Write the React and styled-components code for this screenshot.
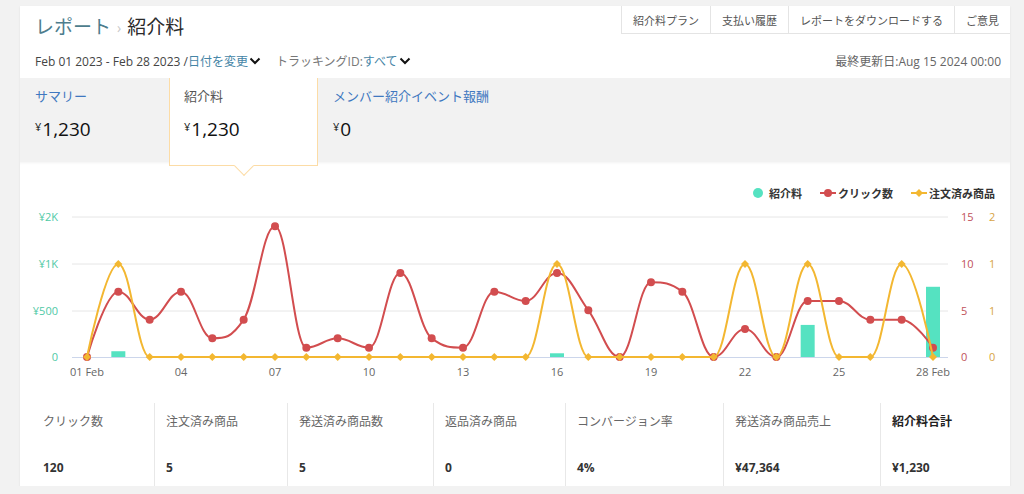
import styled, { createGlobalStyle } from 'styled-components';

const GlobalStyle = createGlobalStyle`
  body {
    margin: 0;
    background: #f2f2f2;
    font-family: "Open Sans", "Noto Sans CJK JP", sans-serif;
    color: #333;
  }
`;

const clicks = [0, 7, 4, 7, 2, 4, 14, 1, 2, 1, 9, 2, 1, 7, 6, 9, 5, 0, 8, 7, 0, 3, 0, 6, 6, 4, 4, 1];
const orderDays = [2, 16, 22, 24, 27];
const fees = { 2: 62, 16: 40, 24: 345, 28: 755 };

const TEAL = '#55e2c1';
const RED = '#d24d4f';
const YELLOW = '#f3b731';

const dayX = (d) => 67 + (d - 1) * (846 / 27);
const BASE = 156;

// highcharts-like spline, flat at local extremes
const splinePath = (pts) => {
  const sm = 1.5;
  const den = sm + 1;
  const ctrl = pts.map((p, i) => {
    if (i === 0 || i === pts.length - 1) return null;
    const l = pts[i - 1];
    const n = pts[i + 1];
    const lcx = (sm * p.x + l.x) / den;
    const rcx = (sm * p.x + n.x) / den;
    let lcy = (sm * p.y + l.y) / den;
    let rcy = (sm * p.y + n.y) / den;
    const corr = ((rcy - lcy) * (rcx - p.x)) / (rcx - lcx) + p.y - rcy;
    lcy += corr;
    rcy += corr;
    if (lcy > l.y && lcy > p.y) {
      lcy = Math.max(l.y, p.y);
      rcy = 2 * p.y - lcy;
    } else if (lcy < l.y && lcy < p.y) {
      lcy = Math.min(l.y, p.y);
      rcy = 2 * p.y - lcy;
    }
    if (rcy > n.y && rcy > p.y) {
      rcy = Math.max(n.y, p.y);
      lcy = 2 * p.y - rcy;
    } else if (rcy < n.y && rcy < p.y) {
      rcy = Math.min(n.y, p.y);
      lcy = 2 * p.y - rcy;
    }
    return { lcx, lcy, rcx, rcy };
  });
  let d = `M ${pts[0].x} ${pts[0].y}`;
  for (let i = 1; i < pts.length; i++) {
    const prev = ctrl[i - 1] || { rcx: pts[i - 1].x, rcy: pts[i - 1].y };
    const cur = ctrl[i] || { lcx: pts[i].x, lcy: pts[i].y };
    d += ` C ${prev.rcx} ${prev.rcy} ${cur.lcx} ${cur.lcy} ${pts[i].x} ${pts[i].y}`;
  }
  return d;
};

const clickPts = clicks.map((v, i) => ({ x: dayX(i + 1), y: BASE - v * (140 / 15) }));
const orderPts = clicks.map((_, i) => ({ x: dayX(i + 1), y: BASE - (orderDays.includes(i + 1) ? 93 : 0) }));

const Card = styled.div`
  width: 990px;
  margin: 6px 0 0 20px;
  background: #fff;
  box-shadow: 0 1px 2px rgba(0, 0, 0, 0.08);
`;

const Header = styled.div`
  padding: 0 9px 8px 15px;
`;

const TopRow = styled.div`
  display: flex;
  justify-content: space-between;
  align-items: flex-start;
  height: 40px;
  margin-right: -9px;
`;

const Title = styled.h1`
  margin: 0;
  height: 40px;
  display: flex;
  align-items: center;
  font-size: 19px;
  font-weight: 400;
  color: #2a2a2a;
`;

const Crumb = styled.span`
  color: #4d7d8d;
`;

const CrumbSep = styled.span`
  color: #c8c8c8;
  font-size: 14px;
  margin: 2px 6px 0;
`;

const Nav = styled.div`
  display: flex;
  border-bottom: 1px solid #e4e4e4;
`;

const NavButton = styled.div`
  height: 27px;
  padding: 0 11px;
  display: flex;
  align-items: center;
  font-size: 11px;
  color: #555;
  border-left: 1px solid #e4e4e4;
`;

const FilterRow = styled.div`
  display: flex;
  align-items: center;
  height: 18px;
  margin-top: 6px;
  font-size: 12px;
  color: #444;
`;

const Filter = styled.span`
  display: flex;
  align-items: center;
  margin-right: ${(p) => p.$gap || 0}px;
  color: ${(p) => (p.$muted ? '#777' : '#444')};
`;

const Link = styled.span`
  color: #4585a6;
`;

const Updated = styled.span`
  margin-left: auto;
  color: #666;
`;

const Chevron = () => (
  <svg width="12" height="8" viewBox="0 0 12 8" style={{ marginLeft: 1 }}>
    <polyline points="1.5,1.5 6,6 10.5,1.5" fill="none" stroke="#111" strokeWidth="2" />
  </svg>
);

const Band = styled.div`
  display: flex;
  align-items: flex-start;
  height: 84px;
  background: #f2f2f2;
`;

const Tab = styled.div`
  position: relative;
  width: 149px;
  box-sizing: border-box;
  height: ${(p) => (p.$active ? 88 : 84)}px;
  padding: 9px 0 0 ${(p) => (p.$active ? 14 : 15)}px;
  background: ${(p) => (p.$active ? '#fff' : 'transparent')};
  border: ${(p) => (p.$active ? '1px solid #fcdca6' : 'none')};
  border-top: none;
  white-space: nowrap;
  z-index: ${(p) => (p.$active ? 2 : 0)};

  ${(p) =>
    p.$active &&
    `
    &::after {
      content: '';
      position: absolute;
      left: 50%;
      bottom: -8px;
      width: 13px;
      height: 13px;
      margin-left: -7px;
      background: #fff;
      border-right: 1px solid #fcdca6;
      border-bottom: 1px solid #fcdca6;
      transform: rotate(45deg);
    }
  `}
`;

const TabLabel = styled.div`
  font-size: 13px;
  line-height: 18px;
  color: ${(p) => (p.$active ? '#555' : '#3f78c0')};
`;

const TabValue = styled.div`
  margin-top: 10px;
  font-size: 19px;
  line-height: 24px;
  color: #111;

  small {
    font-size: 11px;
    vertical-align: 5px;
    margin-right: 1px;
  }
`;

const ChartSection = styled.div`
  padding-top: 23px;
  box-shadow: inset 0 3px 3px -2px rgba(0, 0, 0, 0.05);
`;

const Legend = styled.div`
  display: flex;
  justify-content: flex-end;
  align-items: center;
  gap: 18px;
  height: 16px;
  padding-right: 15px;
`;

const LegendItem = styled.div`
  display: flex;
  align-items: center;
  gap: ${(p) => p.$gap}px;
  font-size: 11px;
  font-weight: 700;
  color: #333;
`;

const Chart = styled.svg`
  display: block;
  width: 990px;
  height: 201px;
  font-family: "Open Sans", "Noto Sans CJK JP", sans-serif;
  font-size: 11px;
`;

const Stats = styled.div`
  display: grid;
  grid-template-columns: 134px 133px 146px 132px 158px 157px 1fr;
  height: 84px;
  padding-top: 1px;
  box-sizing: border-box;
`;

const Stat = styled.div`
  padding: 10px 0 0 ${(p) => (p.$first ? 23 : 11)}px;
  border-left: ${(p) => (p.$first ? 'none' : '1px solid #e8e8e8')};
`;

const StatLabel = styled.div`
  font-size: 12px;
  line-height: 18px;
  color: ${(p) => (p.$strong ? '#222' : '#666')};
  font-weight: ${(p) => (p.$strong ? 700 : 400)};
`;

const StatValue = styled.div`
  margin-top: 28px;
  font-size: 12px;
  line-height: 18px;
  font-weight: 700;
  color: #333;
`;

const stats = [
  ['クリック数', '120'],
  ['注文済み商品', '5'],
  ['発送済み商品数', '5'],
  ['返品済み商品', '0'],
  ['コンバージョン率', '4%'],
  ['発送済み商品売上', '¥47,364'],
  ['紹介料合計', '¥1,230'],
];

const gridYs = [16, 63, 110];
const leftLabels = ['¥2K', '¥1K', '¥500', '0'];
const redLabels = ['15', '10', '5', '0'];
const yellowLabels = ['2', '1', '1', '0'];
const xLabels = [
  [1, '01 Feb'], [4, '04'], [7, '07'], [10, '10'], [13, '13'],
  [16, '16'], [19, '19'], [22, '22'], [25, '25'], [28, '28 Feb'],
];

const App = () => (
  <>
    <GlobalStyle />
    <Card>
      <Header>
        <TopRow>
          <Title>
            <Crumb>レポート</Crumb>
            <CrumbSep>›</CrumbSep>
            紹介料
          </Title>
          <Nav>
            <NavButton>紹介料プラン</NavButton>
            <NavButton>支払い履歴</NavButton>
            <NavButton>レポートをダウンロードする</NavButton>
            <NavButton>ご意見</NavButton>
          </Nav>
        </TopRow>
        <FilterRow>
          <Filter $gap={15}>
            Feb 01 2023 - Feb 28 2023 /<Link>日付を変更</Link>
            <Chevron />
          </Filter>
          <Filter $muted>
            トラッキングID:<Link>すべて</Link>
            <Chevron />
          </Filter>
          <Updated>最終更新日:Aug 15 2024 00:00</Updated>
        </FilterRow>
      </Header>

      <Band>
        <Tab>
          <TabLabel>サマリー</TabLabel>
          <TabValue><small>¥</small>1,230</TabValue>
        </Tab>
        <Tab $active>
          <TabLabel $active>紹介料</TabLabel>
          <TabValue><small>¥</small>1,230</TabValue>
        </Tab>
        <Tab>
          <TabLabel>メンバー紹介イベント報酬</TabLabel>
          <TabValue><small>¥</small>0</TabValue>
        </Tab>
      </Band>

      <ChartSection>
        <Legend>
          <LegendItem $gap={6}>
            <svg width="10" height="10"><circle cx="5" cy="5" r="5" fill={TEAL} /></svg>
            紹介料
          </LegendItem>
          <LegendItem $gap={2}>
            <svg width="16" height="10">
              <line x1="0" y1="5" x2="16" y2="5" stroke={RED} strokeWidth="2" />
              <circle cx="8" cy="5" r="4" fill={RED} />
            </svg>
            クリック数
          </LegendItem>
          <LegendItem $gap={2}>
            <svg width="16" height="10">
              <line x1="0" y1="5" x2="16" y2="5" stroke={YELLOW} strokeWidth="2" />
              <path d="M8 1 L12 5 L8 9 L4 5 Z" fill={YELLOW} />
            </svg>
            注文済み商品
          </LegendItem>
        </Legend>

        <Chart viewBox="0 0 990 201">
          {gridYs.map((y) => (
            <line key={y} x1="52" x2="928" y1={y} y2={y} stroke="#e6e6e6" />
          ))}
          <line x1="52" x2="928" y1={BASE + 0.5} y2={BASE + 0.5} stroke="#ccd6eb" />

          {[...gridYs, BASE].map((y, i) => (
            <g key={i}>
              <text x="38" y={y + 4} textAnchor="end" fill="#4fc9a6">{leftLabels[i]}</text>
              <text x="941" y={y + 4} fill="#c0515a">{redLabels[i]}</text>
              <text x="969" y={y + 4} fill="#d8a444">{yellowLabels[i]}</text>
            </g>
          ))}

          {xLabels.map(([d, t]) => (
            <text key={d} x={dayX(d)} y="175" textAnchor="middle" fill="#666">{t}</text>
          ))}

          {Object.entries(fees).map(([d, v]) => {
            const h = v * 0.093;
            return <rect key={d} x={dayX(+d) - 7} y={BASE - h} width="14" height={h} fill={TEAL} />;
          })}

          <path d={splinePath(clickPts)} fill="none" stroke={RED} strokeWidth="2" />
          {clickPts.map((p, i) => (
            <circle key={i} cx={p.x} cy={p.y} r="4" fill={RED} />
          ))}

          <path d={splinePath(orderPts)} fill="none" stroke={YELLOW} strokeWidth="2" />
          {orderPts.map((p, i) => (
            <path key={i} d={`M${p.x} ${p.y - 4} L${p.x + 4} ${p.y} L${p.x} ${p.y + 4} L${p.x - 4} ${p.y} Z`} fill={YELLOW} />
          ))}
        </Chart>
      </ChartSection>

      <Stats>
        {stats.map(([label, value], i) => (
          <Stat key={label} $first={i === 0}>
            <StatLabel $strong={i === stats.length - 1}>{label}</StatLabel>
            <StatValue>{value}</StatValue>
          </Stat>
        ))}
      </Stats>
    </Card>
  </>
);

export default App;
